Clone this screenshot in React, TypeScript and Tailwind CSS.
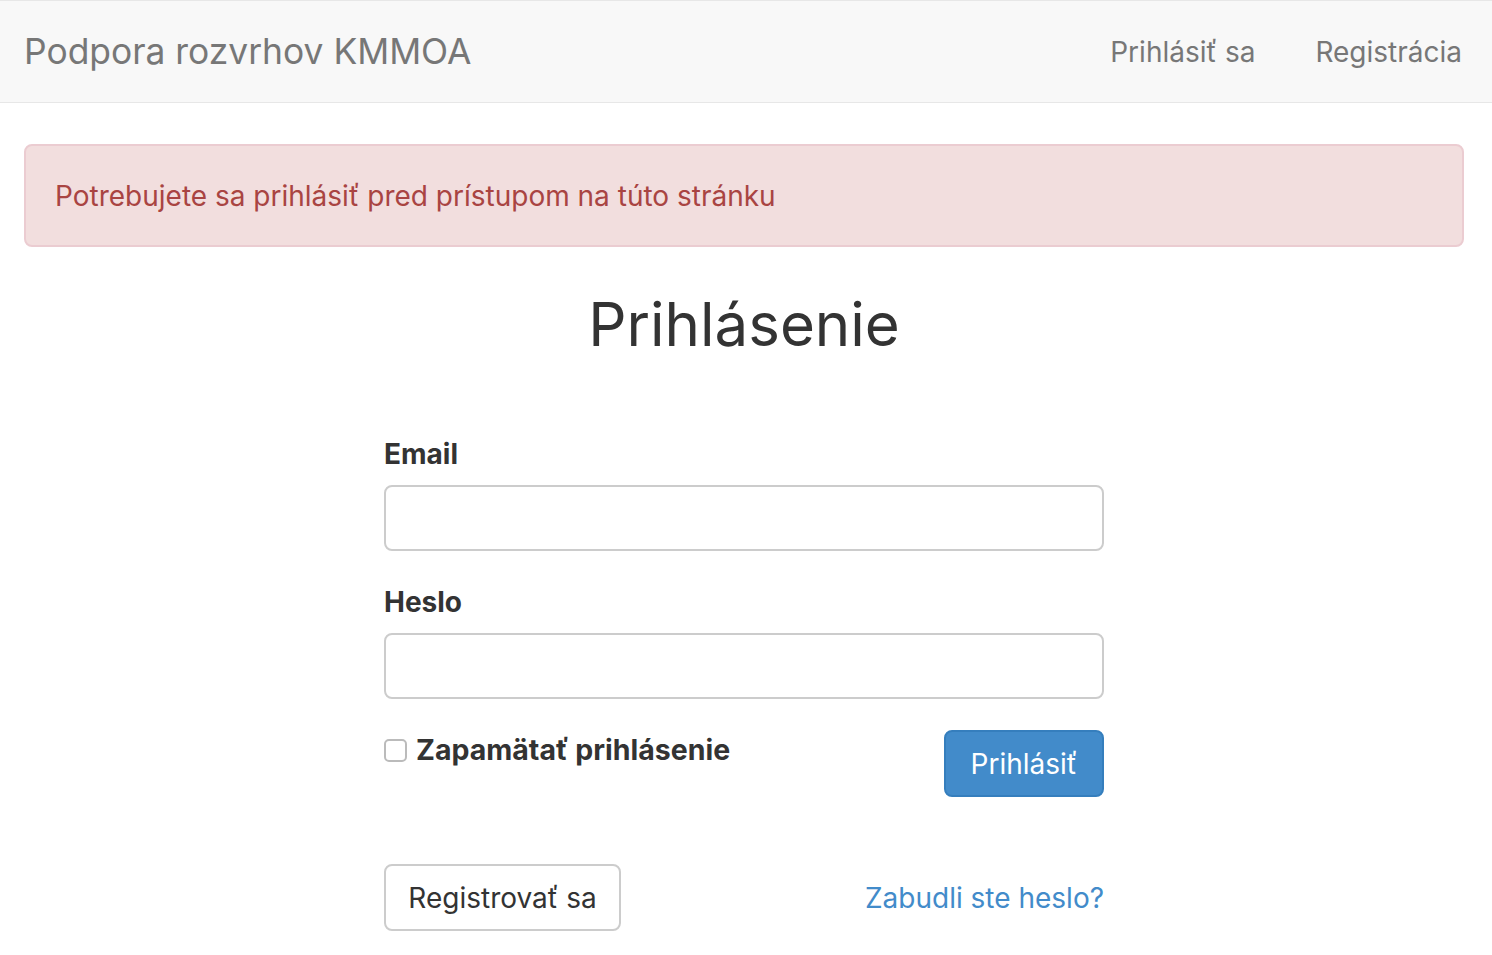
import React from 'react';

const font = { fontFamily: 'Inter, "Noto Sans", sans-serif' };

function Navbar() {
  return (
    <nav className="flex h-[103px] items-center justify-between border-y border-[#e7e7e7] bg-[#f8f8f8] pl-6 pr-[30px]">
      <a className="text-[35.4px] leading-none text-[#777]">Podpora rozvrhov KMMOA</a>
      <div className="flex items-center gap-[60px] text-[28px] text-[#777]">
        <a>Prihlásiť sa</a>
        <a>Registrácia</a>
      </div>
    </nav>
  );
}

function Field({ label, type, top }: { label: string; type: string; top: string }) {
  return (
    <div className={top}>
      <label className="block text-[28px] font-bold leading-[40px] text-[#333]">{label}</label>
      <input
        type={type}
        className="mt-[11px] block h-[66px] w-full rounded-[8px] border-2 border-[#ccc] bg-white px-6 text-[28px] outline-none"
      />
    </div>
  );
}

export default function App() {
  return (
    <div className="min-h-screen bg-white" style={font}>
      <Navbar />
      <main className="pl-6 pr-7">
        <div className="mt-[41px] flex h-[103px] items-center rounded-[8px] border-2 border-[#ebccd1] bg-[#f2dede] px-[29px] text-[28px] text-[#a94442]">
          Potrebujete sa prihlásiť pred prístupom na túto stránku
        </div>

        <h1 className="mt-[42px] text-center text-[60px] font-normal leading-[70px] text-[#333]">Prihlásenie</h1>

        <form className="mx-auto w-[720px]">
          <Field label="Email" type="email" top="mt-[75px]" />
          <Field label="Heslo" type="password" top="mt-[31px]" />

          <div className="mt-[31px] flex items-start justify-between">
            <label className="flex items-center gap-[9px] text-[28.5px] font-bold leading-[40px] text-[#333]">
              <span className="h-[23px] w-[23px] rounded-[5px] border-2 border-[#bbb] bg-white" />
              Zapamätať prihlásenie
            </label>
            <button
              type="button"
              className="h-[67px] w-[160px] rounded-[8px] border-2 border-[#357ebd] bg-[#428bca] text-[28px] text-white"
            >
              Prihlásiť
            </button>
          </div>

          <div className="mt-[67px] flex items-center justify-between">
            <button
              type="button"
              className="h-[67px] w-[237px] rounded-[8px] border-2 border-[#ccc] bg-white text-[28px] text-[#333]"
            >
              Registrovať sa
            </button>
            <a className="text-[28px] text-[#428bca]">Zabudli ste heslo?</a>
          </div>
        </form>
      </main>
    </div>
  );
}
